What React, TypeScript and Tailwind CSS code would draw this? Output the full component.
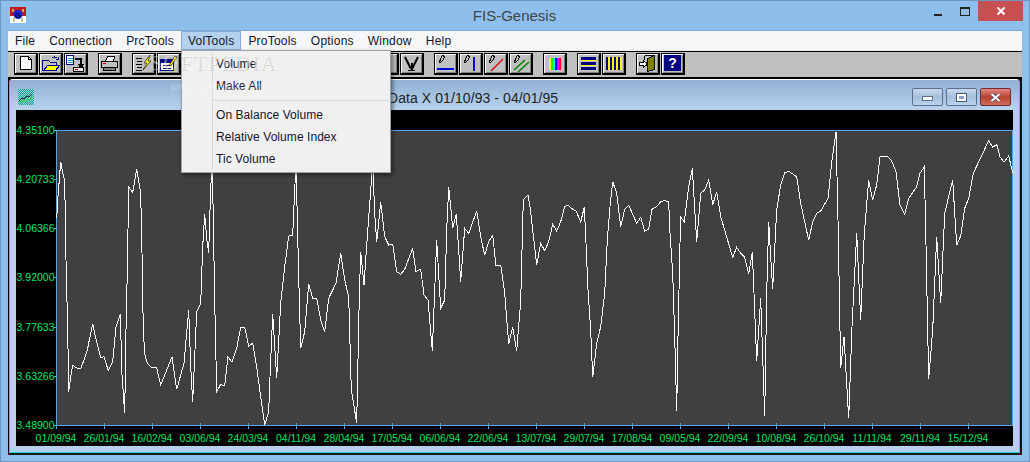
import * as React from "react";

const menus = ["File", "Connection", "PrcTools", "VolTools", "ProTools", "Options", "Window", "Help"];

const yLabels = [
  ["4.35100", 130],
  ["4.20733", 179],
  ["4.06366", 228],
  ["3.92000", 277],
  ["3.77633", 327],
  ["3.63266", 376],
  ["3.48900", 425],
] as const;

const xLabels = [
  "01/09/94", "26/01/94", "16/02/94", "03/06/94", "24/03/94", "04/11/94", "28/04/94",
  "17/05/94", "06/06/94", "22/06/94", "13/07/94", "29/07/94", "17/08/94", "09/05/94",
  "22/09/94", "10/08/94", "26/10/94", "11/11/94", "29/11/94", "15/12/94",
];

// traced off the reference, in 3x crop coordinates
const leftTrace = [
  20,265, 24,200, 32,95, 38,130, 44,150, 48,390, 52,550, 55,700, 56,785, 62,740, 68,706, 80,714, 92,716, 100,695,
  112,660, 120,620, 128,582, 136,620, 144,650, 152,683, 162,680, 175,722, 188,695, 198,590, 211,553, 216,735,
  224,850, 228,600, 232,425, 236,172, 248,187, 260,118, 272,190, 276,370, 280,600, 284,672, 292,700, 304,712,
  320,714, 332,765, 366,680, 380,778, 402,700, 416,540, 422,710, 428,815, 440,545, 452,522, 458,350, 464,252,
  470,325, 476,368, 482,175, 487,100, 494,510, 498,690, 500,785, 512,763, 524,768, 534,680, 546,697, 560,655,
  572,592, 584,592, 596,648, 608,640, 620,710, 632,800, 644,885, 656,845, 660,740, 668,553, 680,743, 692,520,
  704,410, 716,318, 728,316, 734,180, 738,100, 746,440, 752,655, 764,605, 776,463, 788,505, 800,505, 812,570,
  824,605, 836,505, 858,460, 872,370, 884,450, 896,500, 904,780, 920,878, 928,500, 932,366, 942,465, 950,345,
  960,210, 968,100, 974,250, 980,335, 992,216, 1004,320, 1016,345, 1028,342, 1040,425, 1052,433, 1064,418,
  1088,355, 1098,425, 1112,418, 1122,495, 1134,510, 1147,662, 1152,535, 1160,330, 1172,535, 1184,510, 1190,300,
  1196,172, 1204,250, 1208,295, 1219,252, 1226,360, 1232,455, 1244,295, 1256,310, 1280,243, 1292,320, 1304,376,
  1316,335, 1328,316, 1338,408, 1352,405, 1364,490, 1376,642, 1388,590, 1400,662, 1412,515, 1420,210, 1434,196,
];

const rightTrace = [
  0,230, 8,300, 20,405, 32,340, 44,362, 56,335, 68,283, 80,303, 92,275, 104,230, 114,225, 128,238, 138,243,
  152,275, 163,232, 168,340, 174,480, 182,600, 188,742, 200,640, 212,590, 224,490, 232,330, 240,230, 248,155,
  260,190, 272,290, 284,238, 296,226, 320,280, 332,262, 344,304, 356,298, 366,238, 380,230, 392,215, 404,211,
  416,216, 420,310, 428,430, 434,620, 440,842, 444,620, 450,340, 452,262, 463,275, 476,170, 487,115, 492,200,
  500,335, 512,190, 524,180, 536,150, 548,224, 560,186, 572,260, 608,382, 620,352, 632,370, 644,382, 656,433,
  667,366, 672,490, 680,692, 692,505, 704,857, 710,490, 716,275, 722,380, 728,476, 740,240, 752,165, 764,128,
  776,124, 800,140, 812,220, 836,331, 848,275, 860,250, 872,243, 894,205, 906,90, 918,5, 924,270, 932,715,
  942,620, 956,865, 966,590, 980,310, 992,570, 1003,310, 1016,150, 1028,210, 1040,165, 1050,80, 1070,78,
  1084,90, 1098,125, 1110,225, 1124,254, 1136,205, 1160,170, 1170,130, 1183,110, 1188,345, 1196,748, 1208,600,
  1220,320, 1232,520, 1244,250, 1268,150, 1280,346, 1292,318, 1304,235, 1316,205, 1330,130, 1376,32, 1388,52,
  1400,43, 1410,80, 1422,97, 1436,78, 1448,128,
];

function tracePoints(trace: number[], originX: number) {
  const out: string[] = [];
  for (let i = 0; i < trace.length; i += 2) {
    out.push(`${(trace[i] / 3 + originX - 16).toFixed(1)},${(trace[i + 1] / 3 + 20).toFixed(1)}`);
  }
  return out;
}

const linePoints = [...tracePoints(leftTrace, 50), ...tracePoints(rightTrace, 530)].join(" ");

function Chart() {
  return (
    <svg width="997" height="336" viewBox="0 0 997 336" className="block">
      <rect x="0" y="0" width="997" height="336" fill="#000" />
      <rect x="40.5" y="20.5" width="956" height="295" fill="#404040" stroke="#55a5f0" />
      {yLabels.map(([label, y]) => (
        <g key={label}>
          <line x1="38" x2="40" y1={y - 110 + 0.5} y2={y - 110 + 0.5} stroke="#55a5f0" />
          <text x="38.5" y={y - 110 + 4} textAnchor="end" fontFamily="'Liberation Sans', sans-serif" fontSize="10.5" fill="#00e564">
            {label}
          </text>
        </g>
      ))}
      {xLabels.map((label, i) => (
        <g key={i}>
          <line x1={40.5 + i * 48} x2={40.5 + i * 48} y1="313" y2="319" stroke="#55a5f0" />
          <text x={40 + i * 48} y="332" textAnchor="middle" fontFamily="'Liberation Sans', sans-serif" fontSize="10.5" fill="#00e564">
            {label}
          </text>
        </g>
      ))}
      <polyline points={linePoints} fill="none" stroke="#fff" strokeWidth="1" shapeRendering="crispEdges" />
    </svg>
  );
}

function ToolButton({ children }: { children?: React.ReactNode }) {
  return (
    <div className="w-[24px] h-[22px] bg-[#c0c0c0] border border-black border-r-2 border-b-2 shadow-[inset_1px_1px_0_#fff,inset_-1px_-1px_0_#808080] flex items-center justify-center">
      <svg width="21" height="19" viewBox="0 0 21 19" shapeRendering="crispEdges">
        {children}
      </svg>
    </div>
  );
}

const pencil = (
  <path d="M4.5 8.5 L5.5 4.5 L7.5 1.5 L9.5 2.5 L8.5 5.5 L5.5 8.5 Z" fill="#c0c0c0" stroke="#000" strokeWidth="1" />
);

function App() {
  return (
    <div className="relative w-[1030px] h-[462px] overflow-hidden bg-[#8ebfec] border border-[#6f96be] flex flex-col font-['Liberation_Sans',sans-serif]">
      {/* title bar */}
      <div className="h-[29px] shrink-0 grid grid-cols-[1fr_auto_1fr] pl-[9px] pr-[6px]">
        <div className="flex items-start pt-[6px]">
          <svg width="16" height="16" viewBox="0 0 16 16" shapeRendering="crispEdges">
            <rect width="16" height="16" fill="#fff" />
            <rect width="16" height="9" fill="#c8141e" />
            <rect x="3" y="11" width="2" height="4" fill="#c8c080" />
            <rect x="11" y="11" width="2" height="4" fill="#c8c080" />
            <rect x="2" y="2" width="2" height="3" fill="#c8b040" />
            <rect x="12" y="2" width="2" height="3" fill="#c8b040" />
            <circle cx="8" cy="7.5" r="4.5" fill="#1428d8" shapeRendering="auto" />
            <text x="8" y="10.5" textAnchor="middle" fontSize="8" fontWeight="700" fill="#0a0a40" fontFamily="'Liberation Sans', sans-serif">G</text>
          </svg>
        </div>
        <div className="pr-[4px] text-[15px] leading-[30px] text-[#444444]">FIS-Genesis</div>
        <div className="flex justify-end items-start">
          <div className="w-[26px] h-[20px] flex items-center justify-center pt-[7px]">
            <div className="w-[8px] h-[2px] bg-[#222222]" />
          </div>
          <div className="w-[27px] h-[20px] flex items-start justify-center pt-[6px]">
            <div className="w-[10px] h-[9px] border border-[#222222] border-t-2" />
          </div>
          <div className="w-[45px] h-[20px] bg-[#c75050] flex items-center justify-center">
            <svg width="10" height="10" viewBox="0 0 10 10">
              <path d="M1.5 1.5 L8.5 8.5 M8.5 1.5 L1.5 8.5" stroke="#fff" strokeWidth="2" />
            </svg>
          </div>
        </div>
      </div>

      {/* client area */}
      <div className="mx-[7px] mb-[6px] flex-1 flex flex-col border-t border-[#7fa6cf] border-b-2 border-b-[#1a1a1a] min-h-0">
        <div className="h-[20px] shrink-0 bg-[#f5f6f8] border-b border-[#ececec] flex items-stretch text-[12px] text-[#14142a] tracking-[0.22px]">
          {menus.map((m) => (
            <div
              key={m}
              className={
                m === "VolTools"
                  ? "px-[6px] border border-[#84acdd] bg-[#b4d2f0] flex items-center"
                  : "px-[7px] flex items-center"
              }
            >
              {m}
            </div>
          ))}
        </div>

        {/* toolbar */}
        <div className="h-[28px] shrink-0 bg-[#c0c0c0] border-t border-black border-b-2 border-b-black flex gap-[10px] pl-[6px] pt-px">
          <div className="flex gap-px">
            <ToolButton>
              <path d="M5.5 2.5 H13.5 L16.5 5.5 V15.5 H5.5 Z" fill="#fff" stroke="#000" />
              <path d="M13.5 2.5 V5.5 H16.5" fill="none" stroke="#000" />
            </ToolButton>
            <ToolButton>
              <path d="M2.5 6.5 H8.5 L10.5 8.5 H16.5 V16.5 H2.5 Z" fill="#c0c0c0" stroke="#000080" />
              <path d="M3.5 16.5 L7.5 11.5 H19.5 L15.5 16.5 Z" fill="#ffff00" stroke="#000080" />
              <path d="M11.5 4.5 Q14.5 1.5 17.5 4.5 M15.5 5.5 H18.5 V2.5" fill="none" stroke="#000080" />
            </ToolButton>
            <ToolButton>
              <rect x="1.5" y="1.5" width="7" height="9" fill="#fff" stroke="#000080" />
              <path d="M3 4.5 H8 M3 6.5 H8 M3 8.5 H8" stroke="#00a0c0" />
              <path d="M10 5 H16 V12 M14 10 L16 13 L18 10" fill="none" stroke="#000" strokeWidth="2" />
              <rect x="8.5" y="13.5" width="10" height="4" fill="#e8e8e8" stroke="#000" />
              <rect x="10" y="15" width="3" height="1" fill="#d00000" />
            </ToolButton>
          </div>
          <div className="flex gap-px">
            <ToolButton>
              <path d="M6.5 7.5 L8.5 2.5 H15.5 L14.5 7.5 Z" fill="#fff" stroke="#000" />
              <rect x="2.5" y="7.5" width="16" height="6" fill="#c0c0c0" stroke="#000" />
              <rect x="4" y="9" width="3" height="1" fill="#d00000" />
              <rect x="4.5" y="13.5" width="12" height="3" fill="#808080" stroke="#000" />
            </ToolButton>
          </div>
          <div className="flex gap-px">
            <ToolButton>
              <path d="M3 4.5 H9 M4 7.5 H9 M3 10.5 H9 M4 13.5 H9 M3 16.5 H9" stroke="#000" />
              <path d="M17 1 L11 9 H14 L10 16 L18 7 H15 Z" fill="#ffff00" stroke="#000" strokeWidth="0.6" shapeRendering="auto" />
            </ToolButton>
            <ToolButton>
              <rect x="2.5" y="5.5" width="13" height="11" fill="#fff" stroke="#000080" />
              <rect x="3" y="6" width="12" height="3" fill="#000080" />
              <path d="M5 11.5 H13 M5 14.5 H13" stroke="#000080" />
              <path d="M11 11 L17 2 L19 3 L13 12 Z" fill="#ffd000" stroke="#000" strokeWidth="0.6" shapeRendering="auto" />
            </ToolButton>
          </div>
          <div className="flex gap-px">
            {[0, 1, 2, 3, 4, 5, 6].map((n) => (
              <ToolButton key={n} />
            ))}
          </div>
          <div className="flex gap-px">
            <ToolButton />
            <ToolButton>
              <path d="M4 3 L10 15 M17 3 L11 15" stroke="#000" strokeWidth="2" fill="none" shapeRendering="auto" />
              <path d="M10.5 9 V17" stroke="#000" strokeWidth="2" />
              <path d="M7 16.5 H14" stroke="#000" />
            </ToolButton>
          </div>
          <div className="flex gap-px">
            <ToolButton>
              {pencil}
              <rect x="2" y="14" width="17" height="2" fill="#0000e0" />
            </ToolButton>
            <ToolButton>
              {pencil}
              <rect x="13" y="3" width="2" height="14" fill="#0000e0" />
            </ToolButton>
            <ToolButton>
              {pencil}
              <path d="M6 17 L18 5" stroke="#e00000" strokeWidth="1.5" shapeRendering="auto" />
            </ToolButton>
            <ToolButton>
              {pencil}
              <path d="M4 16 L15 6 M8 18 L19 8" stroke="#008000" strokeWidth="1.5" shapeRendering="auto" />
            </ToolButton>
          </div>
          <div className="flex gap-px">
            <ToolButton>
              <rect x="5" y="4" width="2" height="12" fill="#ffff00" />
              <rect x="7" y="4" width="2" height="12" fill="#00ff00" />
              <rect x="9" y="4" width="2" height="12" fill="#00ffff" />
              <rect x="11" y="4" width="2" height="12" fill="#0000ff" />
              <rect x="13" y="4" width="2" height="12" fill="#ff00ff" />
              <rect x="15" y="4" width="2" height="12" fill="#ff0000" />
            </ToolButton>
          </div>
          <div className="flex gap-px">
            <ToolButton>
              <rect x="3" y="3" width="15" height="3" fill="#000080" />
              <rect x="3" y="6" width="15" height="1" fill="#ffff00" />
              <rect x="3" y="8" width="15" height="3" fill="#000080" />
              <rect x="3" y="11" width="15" height="1" fill="#ffff00" />
              <rect x="3" y="13" width="15" height="3" fill="#000080" />
            </ToolButton>
            <ToolButton>
              {[3, 7, 11, 15].map((x) => (
                <rect key={x} x={x} y="3" width="2" height="13" fill="#000080" />
              ))}
              {[5, 9, 13, 17].map((x) => (
                <rect key={x} x={x} y="3" width="2" height="13" fill="#ffff00" />
              ))}
            </ToolButton>
          </div>
          <div className="flex gap-px">
            <ToolButton>
              <path d="M10.5 4.5 L17.5 1.5 V15.5 L10.5 17.5 Z" fill="#808000" stroke="#000" />
              <path d="M7.5 1.5 H17.5 M7.5 1.5 V6" stroke="#000" fill="none" />
              <path d="M2.5 8.5 H6.5 V6.5 L10.5 10 L6.5 13.5 V11.5 H2.5 Z" fill="#fff" stroke="#000" />
            </ToolButton>
            <ToolButton>
              <rect x="2" y="1" width="17" height="16" fill="#000080" />
              <text x="10.5" y="14" textAnchor="middle" fontSize="14" fontWeight="700" fill="#fff" fontFamily="'Liberation Sans', sans-serif">?</text>
            </ToolButton>
          </div>
        </div>

        {/* child window */}
        <div className="flex-1 min-h-0 border-l border-l-black pr-[2px] bg-[#111111]">
          <div className="h-full flex flex-col border-t border-t-white border-l border-l-[#20d0e0] border-r border-r-[#20d0e0] border-b border-b-[#20d0e0] rounded-tl-[4px] rounded-tr-[4px] bg-[#b5cfec]">
            <div className="h-[30px] shrink-0 bg-gradient-to-b from-[#90b0d2] to-[#b8d2ee] flex items-start px-[8px]">
              <svg width="16" height="16" viewBox="0 0 16 16" className="mt-[9px]" shapeRendering="crispEdges">
                <defs>
                  <pattern id="dots" width="2" height="2" patternUnits="userSpaceOnUse">
                    <rect width="2" height="2" fill="#90d0c8" />
                    <rect width="1" height="1" fill="#20a0a0" />
                    <rect x="1" y="1" width="1" height="1" fill="#20a0a0" />
                  </pattern>
                </defs>
                <rect width="16" height="16" fill="url(#dots)" />
                <path d="M1 12 L4 9 L6 10 L9 7 L11 8 L14 5" stroke="#101818" fill="none" shapeRendering="auto" />
                <path d="M1 14 L4 12 L7 12 L11 10 L15 8" stroke="#30e030" fill="none" shapeRendering="auto" />
              </svg>
              <div className="ml-[354px] flex-1 text-[14px] tracking-[0.08px] leading-[18px] mt-[9px] text-[#222222]">Data X 01/10/93 - 04/01/95</div>
              <div className="flex gap-[3px] mt-[8px]">
                <div className="w-[31px] h-[18px] rounded-[2px] border border-[#5d6f8c] bg-gradient-to-b from-[#c8daef] via-[#a5bfdb] to-[#bcd3ec] flex items-center justify-center">
                  <div className="w-[11px] h-[5px] mt-[3px] bg-white border border-[#5d6f8c]" />
                </div>
                <div className="w-[31px] h-[18px] rounded-[2px] border border-[#5d6f8c] bg-gradient-to-b from-[#c8daef] via-[#a5bfdb] to-[#bcd3ec] flex items-center justify-center">
                  <div className="w-[11px] h-[9px] bg-white border border-[#4a5a70] flex items-center justify-center">
                    <div className="w-[5px] h-[3px] bg-[#8aa0c0]" />
                  </div>
                </div>
                <div className="w-[31px] h-[18px] rounded-[2px] border border-[#70283a] bg-gradient-to-b from-[#e08a80] via-[#b8402f] to-[#cf6a5c] flex items-center justify-center">
                  <svg width="11" height="9" viewBox="0 0 11 9">
                    <path d="M1.5 1 L9.5 8 M9.5 1 L1.5 8" stroke="#4a4a5a" strokeWidth="3.4" />
                    <path d="M1.5 1 L9.5 8 M9.5 1 L1.5 8" stroke="#fff" strokeWidth="2" />
                  </svg>
                </div>
              </div>
            </div>
            <div className="pl-[6px]">
              <Chart />
            </div>
          </div>
        </div>
      </div>

      {/* open VolTools menu */}
      <div className="absolute left-[180px] top-[49px] w-[210px] h-[123px] bg-[#f0f0f0] border border-[#a0a0a0] shadow-[2px_2px_4px_rgba(0,0,0,0.45)] text-[12px] text-[#14142a] tracking-[0.06px] pt-[2px] flex flex-col">
        <div className="absolute left-[30px] top-[2px] bottom-[2px] w-px bg-[#d8d8d8]" />
        <div className="h-[22px] shrink-0 pl-[34px] leading-[22px]">Volume</div>
        <div className="h-[22px] shrink-0 pl-[34px] leading-[22px]">Make All</div>
        <div className="h-[7px] shrink-0 pl-[31px] pr-[2px] flex items-center">
          <div className="h-px w-full bg-[#d8d8d8]" />
        </div>
        <div className="h-[22px] shrink-0 pl-[34px] leading-[22px]">On Balance Volume</div>
        <div className="h-[22px] shrink-0 pl-[34px] leading-[22px]">Relative Volume Index</div>
        <div className="h-[22px] shrink-0 pl-[34px] leading-[22px]">Tic Volume</div>
      </div>

      {/* watermark over the screenshot */}
      <div className="absolute left-[149px] top-[50px] pointer-events-none text-[21px] leading-[24px] tracking-[1.5px] text-white/40 font-['Liberation_Serif',serif] [text-shadow:1px_1px_0_rgba(120,120,120,0.25)]">
        SOFTPEDIA
      </div>
      <div className="absolute left-[169px] top-[79px] pointer-events-none text-[11px] leading-[12px] text-white/30">
        www.softpedia.com
      </div>
    </div>
  );
}

export default App;
